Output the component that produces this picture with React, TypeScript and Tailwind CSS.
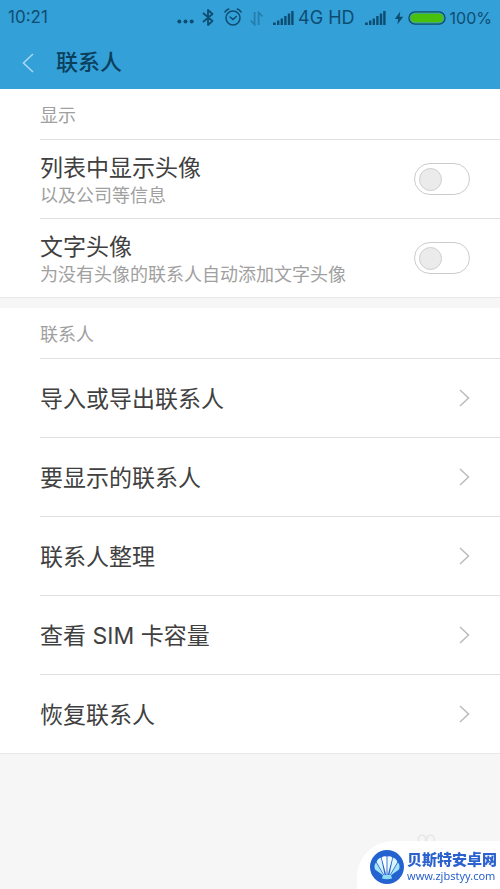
import React from 'react';

interface ToggleItem {
  id: string;
  title: string;
  description: string;
}

const toggles: ToggleItem[] = [
  { id: 'show-photos', title: '列表中显示头像', description: '以及公司等信息' },
  {
    id: 'text-photos',
    title: '文字头像',
    description: '为没有头像的联系人自动添加文字头像',
  },
];

const links = [
  '导入或导出联系人',
  '要显示的联系人',
  '联系人整理',
  '查看 SIM 卡容量',
  '恢复联系人',
];

function SignalIcon({ className }: { className?: string }) {
  return (
    <svg className={className} width="21" height="15" viewBox="0 0 21 15" fill="currentColor">
      <rect x="0" y="11.5" width="2.8" height="2.5" />
      <rect x="4" y="9.5" width="2.4" height="4.5" />
      <rect x="7.6" y="7.5" width="2.4" height="6.5" />
      <rect x="11.2" y="5" width="2.4" height="9" />
      <rect x="14.8" y="2.5" width="2.4" height="11.5" />
      <rect x="18.2" y="0" width="2.4" height="14" />
    </svg>
  );
}

function StatusBar() {
  return (
    <div className="flex h-9 items-center px-2 text-[#0e4d72]">
      <span className="text-[17px]">10:21</span>
      <div className="ml-auto flex items-center">
        <svg className="mr-2" width="17" height="18" viewBox="0 0 17 18" fill="currentColor">
          <circle cx="2.3" cy="12.5" r="2" />
          <circle cx="8.5" cy="12.5" r="2" />
          <circle cx="14.7" cy="12.5" r="2" />
        </svg>
        <svg
          className="mr-2.5"
          width="12"
          height="18"
          viewBox="0 0 12 18"
          fill="none"
          stroke="currentColor"
          strokeWidth="1.8"
          strokeLinejoin="round"
        >
          <path d="M1 4 10.500 12 6 16V1L10.500 5 1 13" />
        </svg>
        <svg
          className="mr-2"
          width="18"
          height="20"
          viewBox="0 0 18 20"
          fill="none"
          stroke="currentColor"
          strokeWidth="1.5"
          strokeLinecap="round"
        >
          <circle cx="9" cy="10" r="7" />
          <path d="M6 9l3 2.500L12.300 8.500M1 4Q2.300 1.800 4.700 1M17 4Q15.700 1.800 13.300 1" />
        </svg>
        <svg
          className="mr-2.5 opacity-40"
          width="13"
          height="15"
          viewBox="0 0 13 15"
          fill="none"
          stroke="currentColor"
          strokeWidth="1.8"
        >
          <path d="M4.6 1v12.500L.8 9.500M8.600 14V1.500l3.800 4" />
        </svg>
        <SignalIcon className="mr-1" />
        <span className="mr-2.5 text-lg leading-5">4G HD</span>
        <SignalIcon className="mr-2" />
        <svg className="mr-1" width="10" height="14" viewBox="0 0 10 14" fill="currentColor">
          <path d="M6.2.5.8 8h3.4L3.4 13.500 9.200 5.800H5.600z" />
        </svg>
        <svg className="mr-1" width="38" height="14" viewBox="0 0 38 14">
          <rect
            x="1"
            y="1"
            width="36"
            height="12"
            rx="6"
            fill="#49c10c"
            stroke="#0e4d72"
            strokeWidth="1.5"
          />
          <rect x="2.2" y="2.2" width="33.6" height="9.6" rx="4.8" fill="none" stroke="#3b9fc0" />
        </svg>
        <span className="text-base">100%</span>
      </div>
    </div>
  );
}

function SectionTitle({ children }: { children: React.ReactNode }) {
  return (
    <h2 className="flex min-h-[50px] items-center pl-10 pt-1 text-lg text-[#a0a0a0]">
      {children}
    </h2>
  );
}

function ToggleRow({ id, title, description }: ToggleItem) {
  return (
    <li className="ml-10 flex min-h-[79px] items-center justify-between border-t border-[#e0e0e0] pr-[30px]">
      <label htmlFor={id} className="pt-1">
        <span className="block text-[23px] leading-[30px] text-[#404040]">{title}</span>
        <span className="block text-lg leading-[26px] text-[#a0a0a0]">{description}</span>
      </label>
      <input
        id={id}
        type="checkbox"
        role="switch"
        className="flex h-8 w-14 flex-none appearance-none items-center rounded-full border border-[#cccccc] bg-white px-1 before:size-[23px] before:rounded-full before:border before:border-[#cfcfcf] before:bg-[#ebebeb] checked:justify-end checked:bg-[#34a0d8]"
      />
    </li>
  );
}

function LinkRow({ label }: { label: string }) {
  return (
    <li className="ml-10 border-t border-[#e0e0e0]">
      <a
        href="#"
        className="flex min-h-[78px] items-center justify-between pr-[30px] text-[23px] text-[#404040]"
      >
        <span className="pt-0.5">{label}</span>
        <svg
          width="11"
          height="18"
          viewBox="0 0 11 18"
          fill="none"
          stroke="#bdbdbd"
          strokeWidth="1.6"
        >
          <path d="M1 1l8.500 8L1 17" />
        </svg>
      </a>
    </li>
  );
}

function SiteBadge() {
  return (
    <div className="fixed bottom-0 right-0">
      <svg
        className="absolute -top-2 left-[60px]"
        width="20"
        height="12"
        viewBox="0 0 20 12"
        fill="none"
        stroke="#e8e8e8"
        strokeWidth="1.8"
      >
        <circle cx="5" cy="6" r="3.8" />
        <circle cx="13.5" cy="6" r="3.8" />
      </svg>
      <div className="relative flex h-12 items-center gap-0.5 rounded-tl-[36px] bg-white pl-3 pr-[3px] pt-1">
        <svg width="36" height="36" viewBox="0 0 36 36">
          <circle cx="18" cy="18" r="17" fill="#2462d0" />
          <path d="M15 27 6 20.500Q4.500 16.500 7 13.500z" fill="#a5e4f6" />
          <path d="M21 27l9-6.500Q31.500 16.500 29 13.500z" fill="#a5e4f6" />
          <path d="M15.800 27 7.600 13Q8.500 9.500 12 8.800z" fill="#d8f5fc" />
          <path d="M20.200 27 28.400 13Q27.500 9.500 24 8.800z" fill="#d8f5fc" />
          <path d="M17.500 27 12.600 8.600Q15 6.500 17.600 7.600z" fill="#ffffff" />
          <path d="M18.500 27 23.400 8.600Q21 6.500 18.400 7.600z" fill="#eefbfe" />
          <path d="M14 26h8l1 3.500Q18 31 13 29.500z" fill="#8edcf2" />
        </svg>
        <div className="text-[#2b62cd]">
          <p className="text-[15px] font-black leading-[18px]">贝斯特安卓网</p>
          <p className="font-['Noto_Sans'] text-[11px] leading-[14px]">www.zjbstyy.com</p>
        </div>
      </div>
    </div>
  );
}

export default function App() {
  return (
    <div className="min-h-screen bg-[#f6f6f6] font-['Inter','Noto_Sans_CJK_SC',sans-serif]">
      <header className="bg-[#34a0d8]">
        <StatusBar />
        <div className="flex min-h-[53px] items-center pl-[22px]">
          <button type="button" aria-label="返回" className="mr-[22px]">
            <svg
              width="12"
              height="20"
              viewBox="0 0 12 20"
              fill="none"
              stroke="#a6d8f5"
              strokeWidth="1.6"
            >
              <path d="M11 1 1.500 10 11 19" />
            </svg>
          </button>
          <h1 className="text-[22px] font-medium text-[#0b3f5c]">联系人</h1>
        </div>
      </header>

      <main>
        <section className="border-b border-[#e8e8e8] bg-white">
          <SectionTitle>显示</SectionTitle>
          <ul>
            {toggles.map((item) => (
              <ToggleRow key={item.id} {...item} />
            ))}
          </ul>
        </section>

        <section className="mt-2.5 border-b border-[#e8e8e8] bg-white">
          <SectionTitle>联系人</SectionTitle>
          <ul>
            {links.map((label) => (
              <LinkRow key={label} label={label} />
            ))}
          </ul>
        </section>
      </main>

      <SiteBadge />
    </div>
  );
}
